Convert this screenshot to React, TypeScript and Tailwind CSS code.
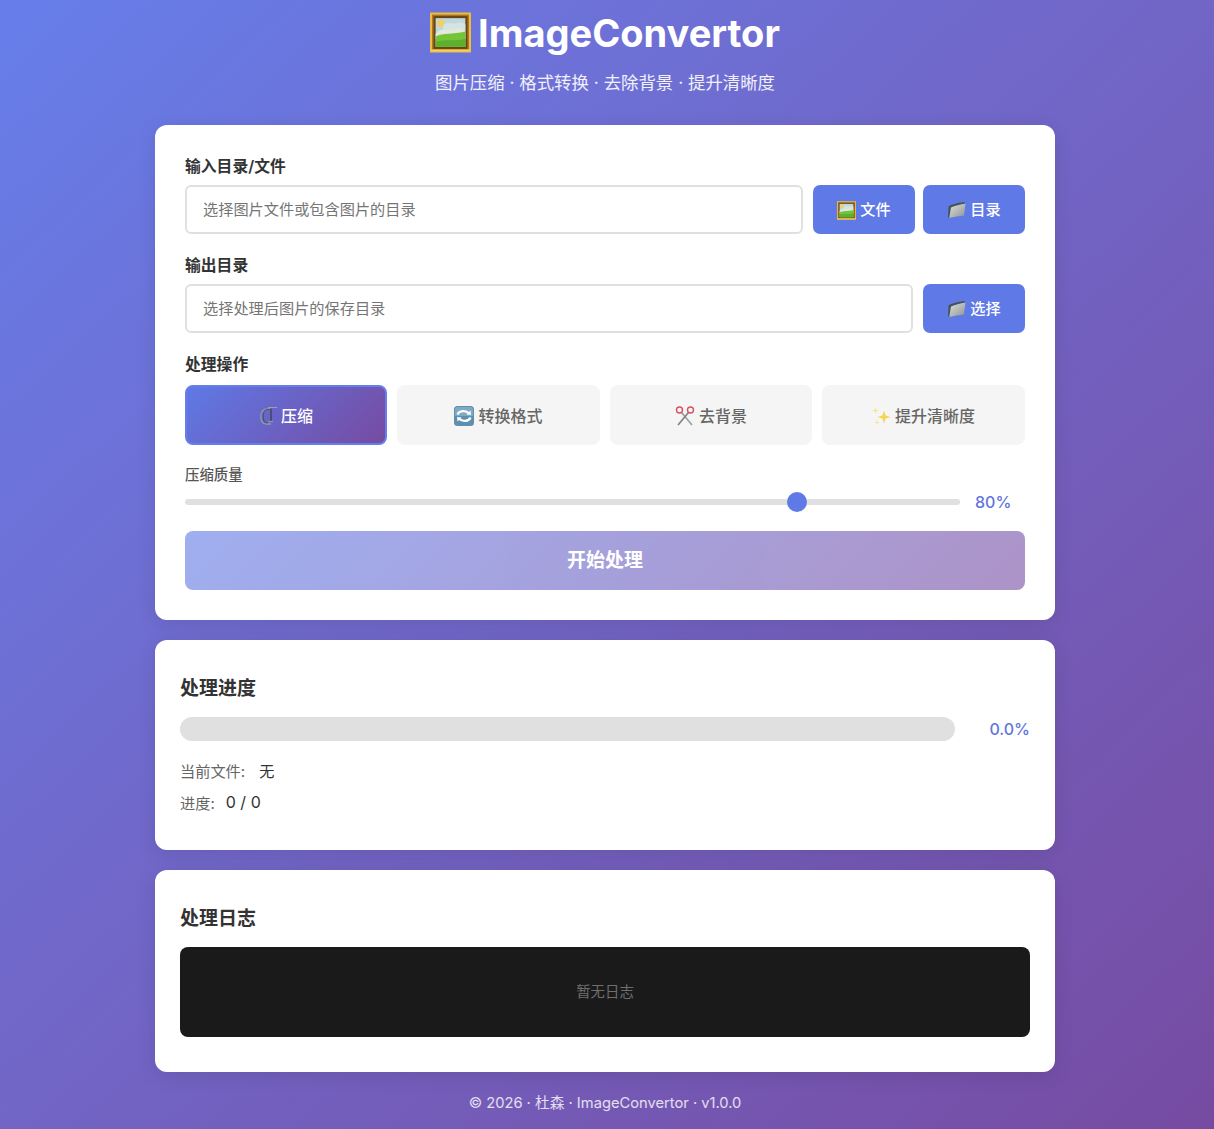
import type { ReactNode } from "react";

const cjk = "font-['Inter','Noto_Sans_CJK_SC',sans-serif]";

// hand drawn emoji, no colour emoji font on the box
function PictureIcon({ size }: { size: number }) {
  return (
    <svg width={size} height={size} viewBox="0 0 40 40" className="shrink-0">
      <rect x="0" y="0.5" width="40" height="39" fill="#eabd45" />
      <rect x="2" y="2.5" width="36" height="35" fill="#a8761f" />
      <rect x="3.5" y="4" width="33" height="32" fill="#6b4415" />
      <rect x="5.5" y="6" width="29" height="28" fill="#bcd9dc" />
      <circle cx="10.5" cy="11" r="3.6" fill="#f2cf63" />
      <path d="M13 13C17 9 22 12 25 11S32 10 34.5 12V19H13Z" fill="#d5e4e2" />
      <path d="M5.5 21C12 14 18 19 23 17S31 16 34.5 19V26H5.5Z" fill="#e2e8dc" />
      <path d="M5.5 24C13 20 22 22 34.5 19V34H5.5Z" fill="#74c43a" />
      <path d="M5.5 29C15 26 24 29 34.5 26V34H5.5Z" fill="#5cb02c" />
      <rect x="1" y="36.5" width="38" height="2" fill="#f3cf62" />
    </svg>
  );
}

function FolderIcon() {
  return (
    <svg width="19" height="18" viewBox="0 0 19 18" className="shrink-0">
      <defs>
        <linearGradient id="folder-face" x1="0" y1="0" x2="1" y2="1">
          <stop offset="0" stopColor="#dfe2dd" />
          <stop offset="1" stopColor="#8c9391" />
        </linearGradient>
      </defs>
      <path d="M1.5 5.5C4 3.5 10 2 17.5 1L18 3L3 17L1 16.5Z" fill="#46535c" />
      <path d="M4 6.5C8 4.8 13 3.5 18.5 2.5L17 14.5C12 15 7 15.8 2.2 17Z" fill="url(#folder-face)" />
    </svg>
  );
}

function ClampIcon() {
  return (
    <svg width="18" height="20" viewBox="0 0 18 20" fill="none" className="shrink-0">
      <path d="M12 3H8C4 3 1.8 6 1.8 10.5S4 18 8 18H12" stroke="#8d9aac" strokeWidth="1.4" />
      <path d="M11.5 3.5H8.5C6 3.5 4.2 6.5 4.2 10.5S6 17 8.5 17" stroke="#4d5868" strokeWidth="1.2" />
      <path d="M9 1.5H18" stroke="#a5aec0" strokeWidth="0.8" />
      <path d="M12 2.5V15" stroke="#39424f" strokeWidth="1.3" />
      <path d="M9.5 15.5H14" stroke="#8d97a8" strokeWidth="1.2" />
    </svg>
  );
}

function RefreshIcon() {
  return (
    <svg width="20" height="20" viewBox="0 0 20 20" fill="none" className="shrink-0">
      <rect x="0" y="0" width="20" height="20" rx="3.5" fill="#5f8fae" />
      <path d="M1 10V3.5C1 2 2 1 3.5 1H16.5C18 1 19 2 19 3.5V10Z" fill="#7eaac4" />
      <path d="M3.5 8.5C5 4.5 12 3.8 15 7.5" stroke="#fff" strokeWidth="2.2" />
      <path d="M12.5 8.5L17 9L16.5 4.5Z" fill="#fff" />
      <path d="M16.5 11.5C15 15.5 8 16.2 5 12.5" stroke="#fff" strokeWidth="2.2" />
      <path d="M7.5 11.5L3 11L3.5 15.5Z" fill="#fff" />
    </svg>
  );
}

function ScissorsIcon() {
  return (
    <svg width="20" height="20" viewBox="0 0 20 20" fill="none" className="shrink-0">
      <path d="M6.5 6.5L17 19" stroke="#9aa0a3" strokeWidth="1.7" />
      <path d="M13.5 6.5L3 19" stroke="#7c8386" strokeWidth="1.7" />
      <circle cx="4.5" cy="4" r="3" stroke="#d6525c" strokeWidth="1.4" />
      <circle cx="15.5" cy="4" r="3" stroke="#d6525c" strokeWidth="1.4" />
    </svg>
  );
}

function SparklesIcon() {
  return (
    <svg width="19" height="20" viewBox="0 0 19 20" className="shrink-0">
      <path d="M12 4.5L13.6 9.4L18.5 11L13.6 12.6L12 17.5L10.4 12.6L5.5 11L10.4 9.4Z" fill="#f5d44f" />
      <path d="M3.5 1L4.3 3.7L7 4.5L4.3 5.3L3.5 8L2.7 5.3L0 4.5L2.7 3.7Z" fill="#f8e58c" />
      <path d="M5 14L5.6 16L7.6 16.6L5.6 17.2L5 19.2L4.4 17.2L2.4 16.6L4.4 16Z" fill="#f8e58c" />
    </svg>
  );
}

function Label({ children }: { children: ReactNode }) {
  return <div className="mb-2 h-[22px] text-[15.8px] leading-[23px] font-semibold text-[#333]">{children}</div>;
}

function PathInput({ placeholder }: { placeholder: string }) {
  return (
    <input
      className="h-[49px] min-w-0 flex-1 rounded-[6px] border-2 border-[#e0e0e0] bg-white px-4 text-[15.2px] text-[#333] outline-none placeholder:text-[#757575]"
      placeholder={placeholder}
      readOnly
    />
  );
}

function BrowseButton({ icon, text }: { icon: ReactNode; text: string }) {
  return (
    <button className="flex h-[49px] w-[102px] items-center justify-center gap-[4px] rounded-[7px] bg-[#5f79e6] pt-px text-[15.2px] font-medium text-white">
      {icon}
      {text}
    </button>
  );
}

function OpTab({ icon, text, active }: { icon: ReactNode; text: string; active?: boolean }) {
  return (
    <button
      className={
        active
          ? "flex h-[60px] items-center justify-center gap-1 rounded-lg border-2 border-[#667eea] bg-[linear-gradient(135deg,#5f79e6,#764ba2)] pt-[2px] text-base font-medium text-white"
          : "flex h-[60px] items-center justify-center gap-1 rounded-lg bg-[#f5f5f5] pt-[2px] text-base font-medium text-[#666]"
      }
    >
      {icon}
      {text}
    </button>
  );
}

export default function App() {
  return (
    <div className={`${cjk} h-[1129px] overflow-hidden bg-linear-to-br from-[#667eea] to-[#764ba2] pr-1`}>
      <div className="mx-auto flex w-[900px] flex-col">
        <h1 className="mt-[9px] flex h-[48px] items-center justify-center gap-[7px] text-[38px] leading-[48px] font-bold text-white">
          <span className="-mt-[2px]">
            <PictureIcon size={41} />
          </span>
          ImageConvertor
        </h1>
        <p className="mt-[14px] h-[24px] text-center text-[17.4px] leading-[24px] text-white/90">
          图片压缩 · 格式转换 · 去除背景 · 提升清晰度
        </p>

        <section className="mt-[30px] rounded-xl bg-white p-[30px] shadow-[0_4px_20px_rgba(0,0,0,0.1)]">
          <Label>输入目录/文件</Label>
          <div className="mb-5 flex">
            <PathInput placeholder="选择图片文件或包含图片的目录" />
            <div className="ml-[10px] flex gap-2">
              <BrowseButton icon={<PictureIcon size={19} />} text="文件" />
              <BrowseButton icon={<FolderIcon />} text="目录" />
            </div>
          </div>

          <Label>输出目录</Label>
          <div className="mb-5 flex">
            <PathInput placeholder="选择处理后图片的保存目录" />
            <div className="ml-[10px]">
              <BrowseButton icon={<FolderIcon />} text="选择" />
            </div>
          </div>

          <div className="mb-[10px] h-[22px] text-[15.8px] leading-[23px] font-semibold text-[#333]">处理操作</div>
          <div className="grid grid-cols-[202px_203px_202px_203px] gap-[10px]">
            <OpTab active icon={<ClampIcon />} text="压缩" />
            <OpTab icon={<RefreshIcon />} text="转换格式" />
            <OpTab icon={<ScissorsIcon />} text="去背景" />
            <OpTab icon={<SparklesIcon />} text="提升清晰度" />
          </div>

          <div className="mt-[20px] h-[20px] text-[14.4px] leading-[20px] font-medium text-[#555]">压缩质量</div>
          <div className="mt-[7px] flex h-5 items-center">
            <div className="relative h-[6px] w-[775px] rounded-full bg-[#e0e0e0]">
              <div className="absolute top-[-7px] left-[602px] size-5 rounded-full bg-[#5f79e6]" />
            </div>
            <span className="ml-[15px] text-base font-medium text-[#6076dc]">80%</span>
          </div>

          <button className="mt-[19px] h-[59px] w-full rounded-lg bg-[linear-gradient(135deg,#5f79e6,#764ba2)] pt-[2px] text-[19px] font-semibold text-white opacity-60">
            开始处理
          </button>
        </section>

        <section className="mt-5 h-[210px] rounded-xl bg-white px-[25px] pt-[35px] shadow-[0_4px_20px_rgba(0,0,0,0.1)]">
          <h2 className="h-[26px] text-[19px] leading-[27px] font-semibold text-[#333]">处理进度</h2>
          <div className="mt-4 flex items-center">
            <div className="h-6 w-[775px] rounded-xl bg-[#e0e0e0]" />
            <span className="flex-1 text-right text-base font-medium text-[#6076dc]">0.0%</span>
          </div>
          <div className="mt-[20px] flex h-[22px] items-center gap-[14px] text-[15.2px] text-[#666]">
            当前文件:
            <span className="text-[#333]">无</span>
          </div>
          <div className="mt-[9px] flex h-[22px] items-center gap-[11px] text-[15.2px] text-[#666]">
            <span className="mt-[2px]">进度:</span>
            <span className="-mt-[2px] text-base text-[#333]">0 / 0</span>
          </div>
        </section>

        <section className="mt-5 h-[202px] rounded-xl bg-white px-[25px] pt-[35px] shadow-[0_4px_20px_rgba(0,0,0,0.1)]">
          <h2 className="h-[26px] text-[19px] leading-[27px] font-semibold text-[#333]">处理日志</h2>
          <div className="mt-4 flex h-[90px] items-center justify-center rounded-lg bg-[#1a1a1a] text-[14.4px] text-[#6e6e6e]">
            暂无日志
          </div>
        </section>

        <footer className="mt-[21px] text-center text-[14.7px] leading-5 text-white/80">© 2026 · 杜森 · ImageConvertor · v1.0.0</footer>
      </div>
    </div>
  );
}
